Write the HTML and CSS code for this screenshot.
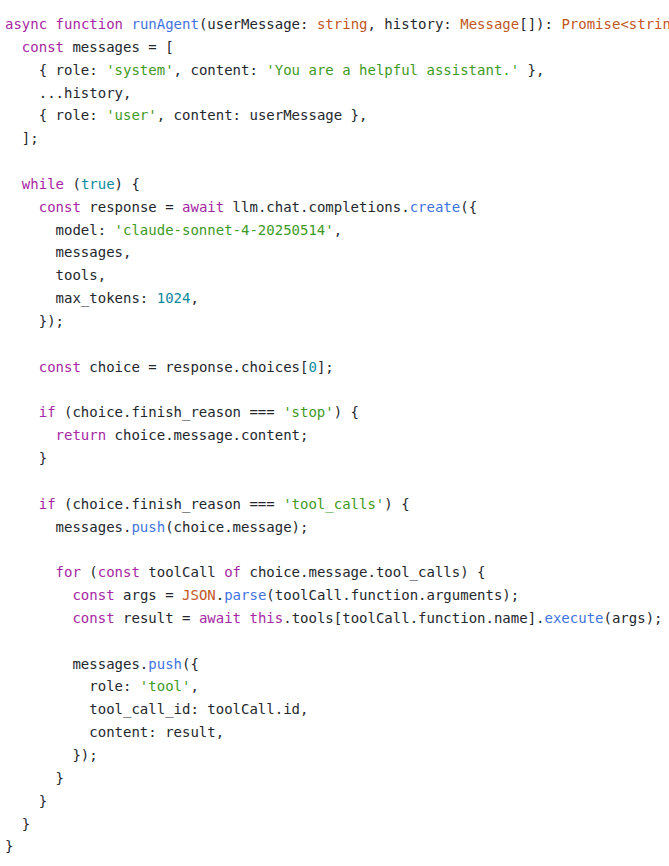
FILE: index.html
```html
<!DOCTYPE html>
<html lang="en">
<head>
<meta charset="utf-8">
<title>runAgent</title>
<link rel="stylesheet" href="styles.css">
</head>
<body>
<pre class="code"><code><span class="k">async</span> <span class="k">function</span> <span class="f">runAgent</span>(userMessage: <span class="t">string</span>, history: <span class="t">Message</span>[]): <span class="t">Promise</span><span class="t">&lt;string&gt;</span> {
  <span class="k">const</span> messages = [
    { role: <span class="s">'system'</span>, content: <span class="s">'You are a helpful assistant.'</span> },
    ...history,
    { role: <span class="s">'user'</span>, content: userMessage },
  ];

  <span class="k">while</span> (<span class="n">true</span>) {
    <span class="k">const</span> response = <span class="k">await</span> llm.chat.completions.<span class="f">create</span>({
      model: <span class="s">'claude-sonnet-4-20250514'</span>,
      messages,
      tools,
      max_tokens: <span class="n">1024</span>,
    });

    <span class="k">const</span> choice = response.choices[<span class="n">0</span>];

    <span class="k">if</span> (choice.finish_reason === <span class="s">'stop'</span>) {
      <span class="k">return</span> choice.message.content;
    }

    <span class="k">if</span> (choice.finish_reason === <span class="s">'tool_calls'</span>) {
      messages.<span class="f">push</span>(choice.message);

      <span class="k">for</span> (<span class="k">const</span> toolCall <span class="k">of</span> choice.message.tool_calls) {
        <span class="k">const</span> args = <span class="t">JSON</span>.<span class="f">parse</span>(toolCall.function.arguments);
        <span class="k">const</span> result = <span class="k">await</span> <span class="k">this</span>.tools[toolCall.function.name].<span class="f">execute</span>(args);

        messages.<span class="f">push</span>({
          role: <span class="s">'tool'</span>,
          tool_call_id: toolCall.id,
          content: result,
        });
      }
    }
  }
}</code></pre>
</body>
</html>
```

FILE: styles.css
```css
html, body {
  margin: 0;
  padding: 0;
  background: #ffffff;
  overflow: hidden;
}

.code {
  margin: 0;
  padding: 13px 0 0 5px;
  font-family: "DejaVu Sans Mono", "Liberation Mono", monospace;
  font-size: 14px;
  line-height: 22.85px;
  color: #24272e;
  white-space: pre;
}

.code code {
  font-family: inherit;
}

.k { color: #a626a4; }
.f { color: #3f74e0; }
.t { color: #c2561e; }
.s { color: #3e9a24; }
.n { color: #0d8a9c; }
```
